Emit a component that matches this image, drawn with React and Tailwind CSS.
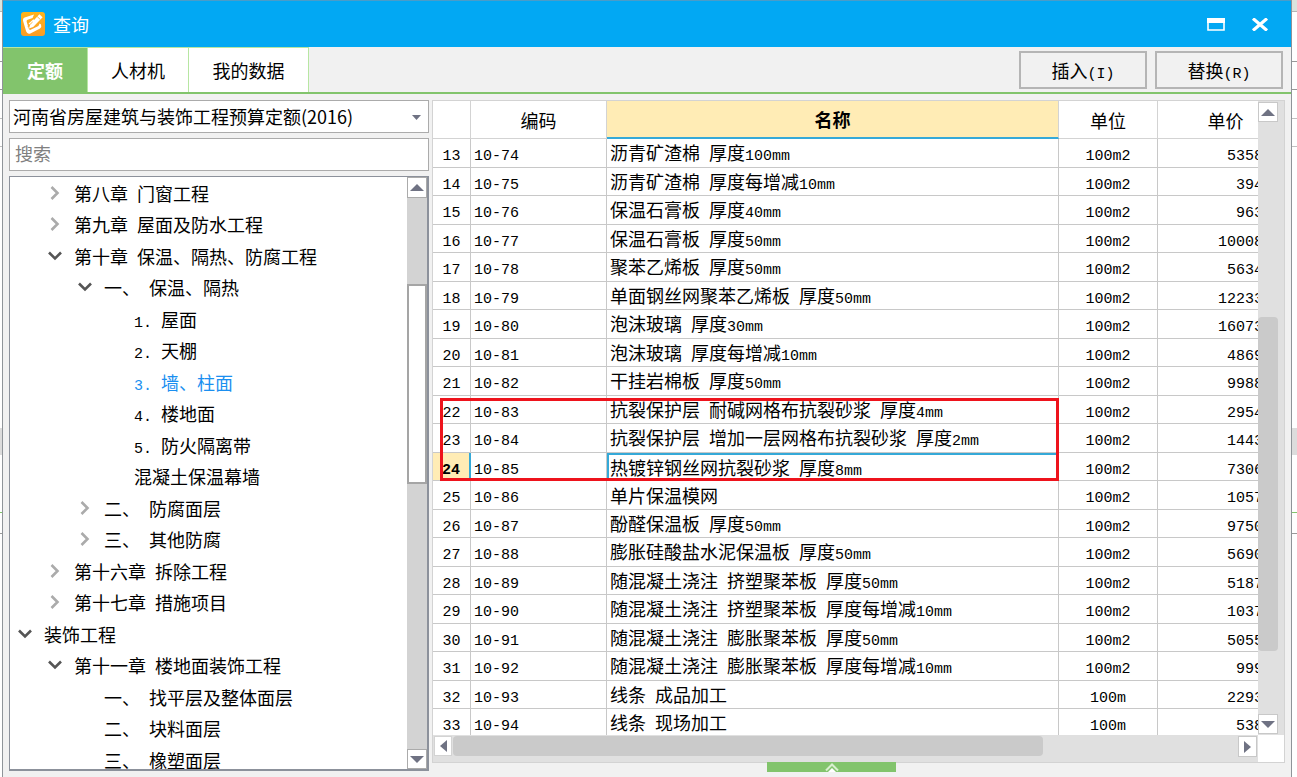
import React, { useState } from 'react';

const tabs = ['定额', '人材机', '我的数据'];

// level: sangría, state: 'open' | 'closed' | undefined (hoja)
const tree = [
  { level: 1, state: 'closed', label: '第八章 门窗工程' },
  { level: 1, state: 'closed', label: '第九章 屋面及防水工程' },
  { level: 1, state: 'open', label: '第十章 保温、隔热、防腐工程' },
  { level: 2, state: 'open', label: '一、 保温、隔热' },
  { level: 3, label: '1. 屋面' },
  { level: 3, label: '2. 天棚' },
  { level: 3, label: '3. 墙、柱面', active: true },
  { level: 3, label: '4. 楼地面' },
  { level: 3, label: '5. 防火隔离带' },
  { level: 3, label: '混凝土保温幕墙' },
  { level: 2, state: 'closed', label: '二、 防腐面层' },
  { level: 2, state: 'closed', label: '三、 其他防腐' },
  { level: 1, state: 'closed', label: '第十六章 拆除工程' },
  { level: 1, state: 'closed', label: '第十七章 措施项目' },
  { level: 0, state: 'open', label: '装饰工程' },
  { level: 1, state: 'open', label: '第十一章 楼地面装饰工程' },
  { level: 2, label: '一、 找平层及整体面层' },
  { level: 2, label: '二、 块料面层' },
  { level: 2, label: '三、 橡塑面层' }
];

const rows = [
  [13, '10-74', '沥青矿渣棉 厚度100mm', '100m2', '5358'],
  [14, '10-75', '沥青矿渣棉 厚度每增减10mm', '100m2', '394'],
  [15, '10-76', '保温石膏板 厚度40mm', '100m2', '963'],
  [16, '10-77', '保温石膏板 厚度50mm', '100m2', '10008'],
  [17, '10-78', '聚苯乙烯板 厚度50mm', '100m2', '5634'],
  [18, '10-79', '单面钢丝网聚苯乙烯板 厚度50mm', '100m2', '12233'],
  [19, '10-80', '泡沫玻璃 厚度30mm', '100m2', '16073'],
  [20, '10-81', '泡沫玻璃 厚度每增减10mm', '100m2', '4869'],
  [21, '10-82', '干挂岩棉板 厚度50mm', '100m2', '9988'],
  [22, '10-83', '抗裂保护层 耐碱网格布抗裂砂浆 厚度4mm', '100m2', '2954'],
  [23, '10-84', '抗裂保护层 增加一层网格布抗裂砂浆 厚度2mm', '100m2', '1443'],
  [24, '10-85', '热镀锌钢丝网抗裂砂浆 厚度8mm', '100m2', '7306'],
  [25, '10-86', '单片保温模网', '100m2', '1057'],
  [26, '10-87', '酚醛保温板 厚度50mm', '100m2', '9750'],
  [27, '10-88', '膨胀硅酸盐水泥保温板 厚度50mm', '100m2', '5690'],
  [28, '10-89', '随混凝土浇注 挤塑聚苯板 厚度50mm', '100m2', '5187'],
  [29, '10-90', '随混凝土浇注 挤塑聚苯板 厚度每增减10mm', '100m2', '1037'],
  [30, '10-91', '随混凝土浇注 膨胀聚苯板 厚度50mm', '100m2', '5055'],
  [31, '10-92', '随混凝土浇注 膨胀聚苯板 厚度每增减10mm', '100m2', '999'],
  [32, '10-93', '线条 成品加工', '100m', '2293'],
  [33, '10-94', '线条 现场加工', '100m', '538']
];

// Los caracteres latinos ocupan medio ancho de un carácter chino
function Mixed({ text }) {
  return text
    .split(/([\x20-\x7e]+)/)
    .filter(Boolean)
    .map((part, i) =>
      /^[\x20-\x7e]/.test(part) ? (
        <span key={i} className="whitespace-pre font-['Liberation_Mono',monospace] text-[15px] leading-none">{part}</span>
      ) : (
        <span key={i}>{part}</span>
      )
    );
}

function Arrow({ dir, className }) {
  const points = {
    up: '0,7 7,0 14,7',
    down: '0,0 14,0 7,7',
    left: '7,0 7,12 0,6',
    right: '0,0 0,12 7,6'
  };
  const vertical = dir === 'up' || dir === 'down';
  return (
    <svg width={vertical ? 14 : 7} height={vertical ? 7 : 12} className={className} aria-hidden="true">
      <polygon points={points[dir]} fill="#6f7283" />
    </svg>
  );
}

function Chevron({ state }) {
  if (state === 'open') {
    return (
      <svg width="14" height="10" viewBox="0 0 14 10" fill="none" aria-hidden="true">
        <path d="M1 1.5 L7 7.5 L13 1.5" stroke="#555" strokeWidth="2.6" />
      </svg>
    );
  }
  return (
    <svg width="10" height="14" viewBox="0 0 10 14" fill="none" aria-hidden="true">
      <path d="M1.5 1 L7.5 7 L1.5 13" stroke="#ababab" strokeWidth="2.6" />
    </svg>
  );
}

function TreeItem({ item }) {
  const indents = ['pl-[8px]', 'pl-[38px]', 'pl-[68px]', 'pl-[98px]'];
  return (
    <li className="odd:h-[31px] even:h-[32px]">
      <button
        type="button"
        className={`flex h-full w-full items-center whitespace-nowrap text-left ${indents[item.level]} ${item.active ? 'text-[#1b8ff0]' : 'text-black'}`}
      >
        <span className="flex w-[14px] shrink-0 justify-center">{item.state && <Chevron state={item.state} />}</span>
        <span className="pl-3"><Mixed text={item.label} /></span>
      </button>
    </li>
  );
}

function TitleBar() {
  return (
    <header className="flex h-[47px] shrink-0 items-center border-t border-[#4a9cc8] bg-[#02a8f3] pl-[18px] pr-[22px] text-white">
      <svg width="24" height="24" viewBox="0 0 24 24" fill="none" aria-hidden="true">
        <defs>
          <linearGradient id="logo" x1="0" y1="0" x2="0" y2="1">
            <stop offset="0" stopColor="#ffb41c" />
            <stop offset="1" stopColor="#f99c25" />
          </linearGradient>
        </defs>
        <rect width="24" height="24" rx="3" fill="url(#logo)" />
        <path d="M13 2.6 L3.6 5.4 Q1.4 6.4 2 8.8 L5.2 19.6 Q6.4 22.6 9.4 21.4 L19 16.4 Q21 15 20 12.6 L18.6 11.6 L17.4 14 L9.6 17.8 Q8.4 18.2 7.8 16.8 L5.6 9.6 Q5.4 8.4 6.6 7.8 L11.6 6 Z" fill="#fff" />
        <path d="M18.4 2.2 L21.6 5.2 L12.2 15 L8 16.4 L9.2 12.2 Z" fill="#fff" />
        <path d="M7.6 11.6 L12.4 7.2 L13.6 8.6 L9 13 Z" fill="#fff" />
        <path d="M16.2 4.6 L19.2 7.4 M6.6 14.6 L11.6 10" stroke="#fcae2b" strokeWidth="0.9" />
      </svg>
      <h1 className="flex-1 pl-2 text-lg leading-6">查询</h1>
      <button type="button" aria-label="最大化" className="mr-[26px]">
        <svg width="18" height="13" aria-hidden="true">
          <path d="M1 1 H17 V12 H1 Z" fill="none" stroke="#fff" strokeWidth="1.6" />
          <rect width="18" height="5" fill="#fff" />
        </svg>
      </button>
      <button type="button" aria-label="关闭">
        <svg width="18" height="13" viewBox="0 0 18 13" aria-hidden="true">
          <path d="M2 0.5 L16 12.5 M16 0.5 L2 12.5" stroke="#fff" strokeWidth="3.2" />
        </svg>
      </button>
    </header>
  );
}

function ScrollButton({ dir, label, className = '' }) {
  return (
    <button type="button" aria-label={label} className={`flex items-center justify-center bg-white ${className}`}>
      <Arrow dir={dir} />
    </button>
  );
}

function Sidebar() {
  return (
    <aside className="flex w-[420px] shrink-0 flex-col gap-[5px]">
      <div className="relative">
        <select
          aria-label="定额库"
          className="block h-[33px] w-full appearance-none border border-[#ababab] bg-white pb-[2px] pl-[3px] pr-8 text-lg leading-6 text-black outline-none"
        >
          <option>河南省房屋建筑与装饰工程预算定额(2016)</option>
        </select>
        <svg width="9" height="5" className="pointer-events-none absolute right-[8px] top-[15px]" aria-hidden="true">
          <polygon points="0,0 9,0 4.5,5" fill="#6f7283" />
        </svg>
      </div>
      <input
        type="text"
        aria-label="搜索"
        placeholder="搜索"
        className="h-[33px] w-full border border-[#ababab] bg-white px-[5px] pb-[3px] text-lg leading-6 outline-none placeholder:text-[#808080]"
      />
      <div className="flex min-h-0 flex-1 border-2 border-l border-t border-[#8c919b] bg-white">
        <ul className="min-w-0 flex-1 overflow-hidden">
          {tree.map((item) => (
            <TreeItem key={item.label} item={item} />
          ))}
        </ul>
        <div className="flex w-[20px] flex-col bg-[#d3d3d3]">
          <ScrollButton dir="up" label="向上" className="h-[21px] border border-[#ababab]" />
          <div className="h-[86px]" />
          <div className="h-[200px] border-2 border-[#a5a5a5] bg-white" />
          <div className="flex-1" />
          <ScrollButton dir="down" label="向下" className="h-[20px] border border-[#ababab]" />
        </div>
      </div>
    </aside>
  );
}

function PriceTable() {
  const [selected, setSelected] = useState(24);
  return (
    <div className="relative min-h-0 flex-1 overflow-hidden bg-white">
      <table className="w-[calc(100%+35px)] table-fixed border-separate border-spacing-0">
        <colgroup>
          <col className="w-[38px]" />
          <col className="w-[136px]" />
          <col />
          <col className="w-[99px]" />
          <col className="w-[135px]" />
        </colgroup>
        <thead>
          <tr className="h-[38px] text-lg leading-6">
            <th className="border-b border-r border-[#d3d3d3] p-0" aria-label="序号" />
            <th className="border-b border-r border-[#d3d3d3] p-0 font-normal">编码</th>
            <th className="border-b-2 border-r border-b-[#35a9d8] border-r-[#d3d3d3] bg-[#ffecb5] p-0 font-bold">名称</th>
            <th className="border-b border-r border-[#d3d3d3] p-0 font-normal">单位</th>
            <th className="border-b border-[#d3d3d3] p-0 font-normal">单价</th>
          </tr>
        </thead>
        <tbody className="leading-5">
          {rows.map(([no, code, name, unit, price]) => {
            const active = no === selected;
            return (
              <tr key={no} onClick={() => setSelected(no)} className="odd:h-[29px] even:h-[28px]">
                <td className={`border-b border-[#c8c8c8] p-0 text-center ${active ? 'border-r-2 border-r-[#35a9d8] bg-[#ffecb5] font-bold' : 'border-r'}`}>
                  <Mixed text={String(no)} />
                </td>
                <td className="border-b border-r border-[#c8c8c8] py-0 pl-[3px] pr-0">
                  <Mixed text={code} />
                </td>
                <td
                  className={`overflow-hidden whitespace-nowrap border-b border-r border-[#c8c8c8] py-0 pr-0 ${active ? 'border-l-2 border-t-2 border-l-[#35a9d8] border-t-[#35a9d8] pl-px' : 'pl-[3px]'}`}
                >
                  <Mixed text={name} />
                </td>
                <td className="border-b border-r border-[#c8c8c8] p-0 text-center">
                  <Mixed text={unit} />
                </td>
                <td className="border-b border-[#c8c8c8] py-0 pl-0 pr-[30px] text-right">
                  <Mixed text={price} />
                </td>
              </tr>
            );
          })}
        </tbody>
      </table>
      {/* Marco rojo sobre las filas 22 a 24 */}
      <div className="pointer-events-none absolute left-[7px] right-[199px] top-[297px] h-[83px] border-3 border-[#ee131c]" />
    </div>
  );
}

function Grid() {
  return (
    <section className="mb-[14px] flex min-w-0 flex-1 border border-[#d3d3d3] bg-[#e0e0e0]">
      <div className="flex min-w-0 flex-1 flex-col">
        <PriceTable />
        <div className="flex h-[27px] shrink-0 items-start pt-px">
          <ScrollButton dir="left" label="向左" className="ml-px h-[20px] w-[18px] border border-[#d3d3d3]" />
          <div className="ml-px h-[20px] w-[590px] rounded-sm bg-[#cacaca]" />
          <div className="flex-1" />
          <ScrollButton dir="right" label="向右" className="mr-px h-[21px] w-[19px] border border-[#c8c8c8]" />
        </div>
      </div>
      <div className="flex w-[26px] shrink-0 flex-col">
        <ScrollButton dir="up" label="向上" className="mt-px h-[20px] w-[20px] border border-[#c8c8c8]" />
        <div className="h-[195px]" />
        <div className="h-[334px] w-[20px] rounded-sm bg-[#cacaca]" />
        <div className="flex-1" />
        <ScrollButton dir="down" label="向下" className="mb-px h-[20px] w-[20px] border border-[#c8c8c8]" />
        <div className="h-[27px] bg-white" />
      </div>
    </section>
  );
}

// Borde visible de la ventana que queda detrás del diálogo
function Backdrop({ className }) {
  return (
    <div className={`flex shrink-0 flex-col overflow-hidden bg-white ${className}`} aria-hidden="true">
      <div className="h-[12px] border-b border-[#b5b5b5] bg-[#dbe4de]" />
      <div className="h-[50px] border-b border-[#999]" />
      <div className="h-[28px] border-b border-[#999]" />
      <div className="h-[29px] border-b border-[#c0c0c0]" />
      <div className="h-[28px] border-b border-[#c0c0c0]" />
      <div className="h-[281px]" />
      <div className="h-[27px] bg-[#dcdcdc]" />
      <div className="h-[58px] border-b border-[#82c46c]" />
      <div className="h-[21px] border-b border-[#999]" />
    </div>
  );
}

export default function App() {
  const [tab, setTab] = useState(0);
  const widths = ['w-[85px]', 'w-[101px]', 'w-[120px]'];

  return (
    <div className="flex h-screen w-full overflow-hidden bg-white font-['Noto_Sans_CJK_SC',sans-serif] text-lg leading-6 text-black">
      <Backdrop className="w-[2px]" />
      <main className="flex min-w-0 flex-1 flex-col border-x border-[#8f9499] bg-[#f1f1f1]">
        <TitleBar />
        <nav className="flex h-[47px] shrink-0 items-center border-b-2 border-[#82c46c]">
          {tabs.map((name, i) => (
            <button
              key={name}
              type="button"
              onClick={() => setTab(i)}
              className={`h-full border-r border-t border-[#b7e6a2] ${widths[i]} ${tab === i ? 'bg-[#82c46c] font-bold text-white' : 'bg-white'}`}
            >
              {name}
            </button>
          ))}
          <div className="flex-1" />
          <button type="button" className="mr-2 h-[38px] w-[128px] border-2 border-[#b5b5b5]">
            <Mixed text="插入(I)" />
          </button>
          <button type="button" className="mr-2 h-[38px] w-[128px] border-2 border-[#b5b5b5]">
            <Mixed text="替换(R)" />
          </button>
        </nav>
        <div className="relative flex min-h-0 flex-1 gap-[3px] pb-0 pl-[6px] pr-[6px] pt-[6px]">
          <div className="flex pb-[6px]">
            <Sidebar />
          </div>
          <Grid />
          <button
            type="button"
            aria-label="展开"
            className="absolute bottom-[5px] left-[764px] flex h-[10px] w-[129px] items-end justify-center bg-[#82c46c]"
          >
            <svg width="14" height="9" viewBox="0 0 14 9" fill="none" aria-hidden="true">
              <path d="M1 7.5 L7 1.5 L13 7.5" stroke="#d9efd0" strokeWidth="2" />
              <polygon points="3,9 7,5 11,9" fill="#fff" />
            </svg>
          </button>
        </div>
      </main>
      <Backdrop className="w-[5px]" />
    </div>
  );
}
